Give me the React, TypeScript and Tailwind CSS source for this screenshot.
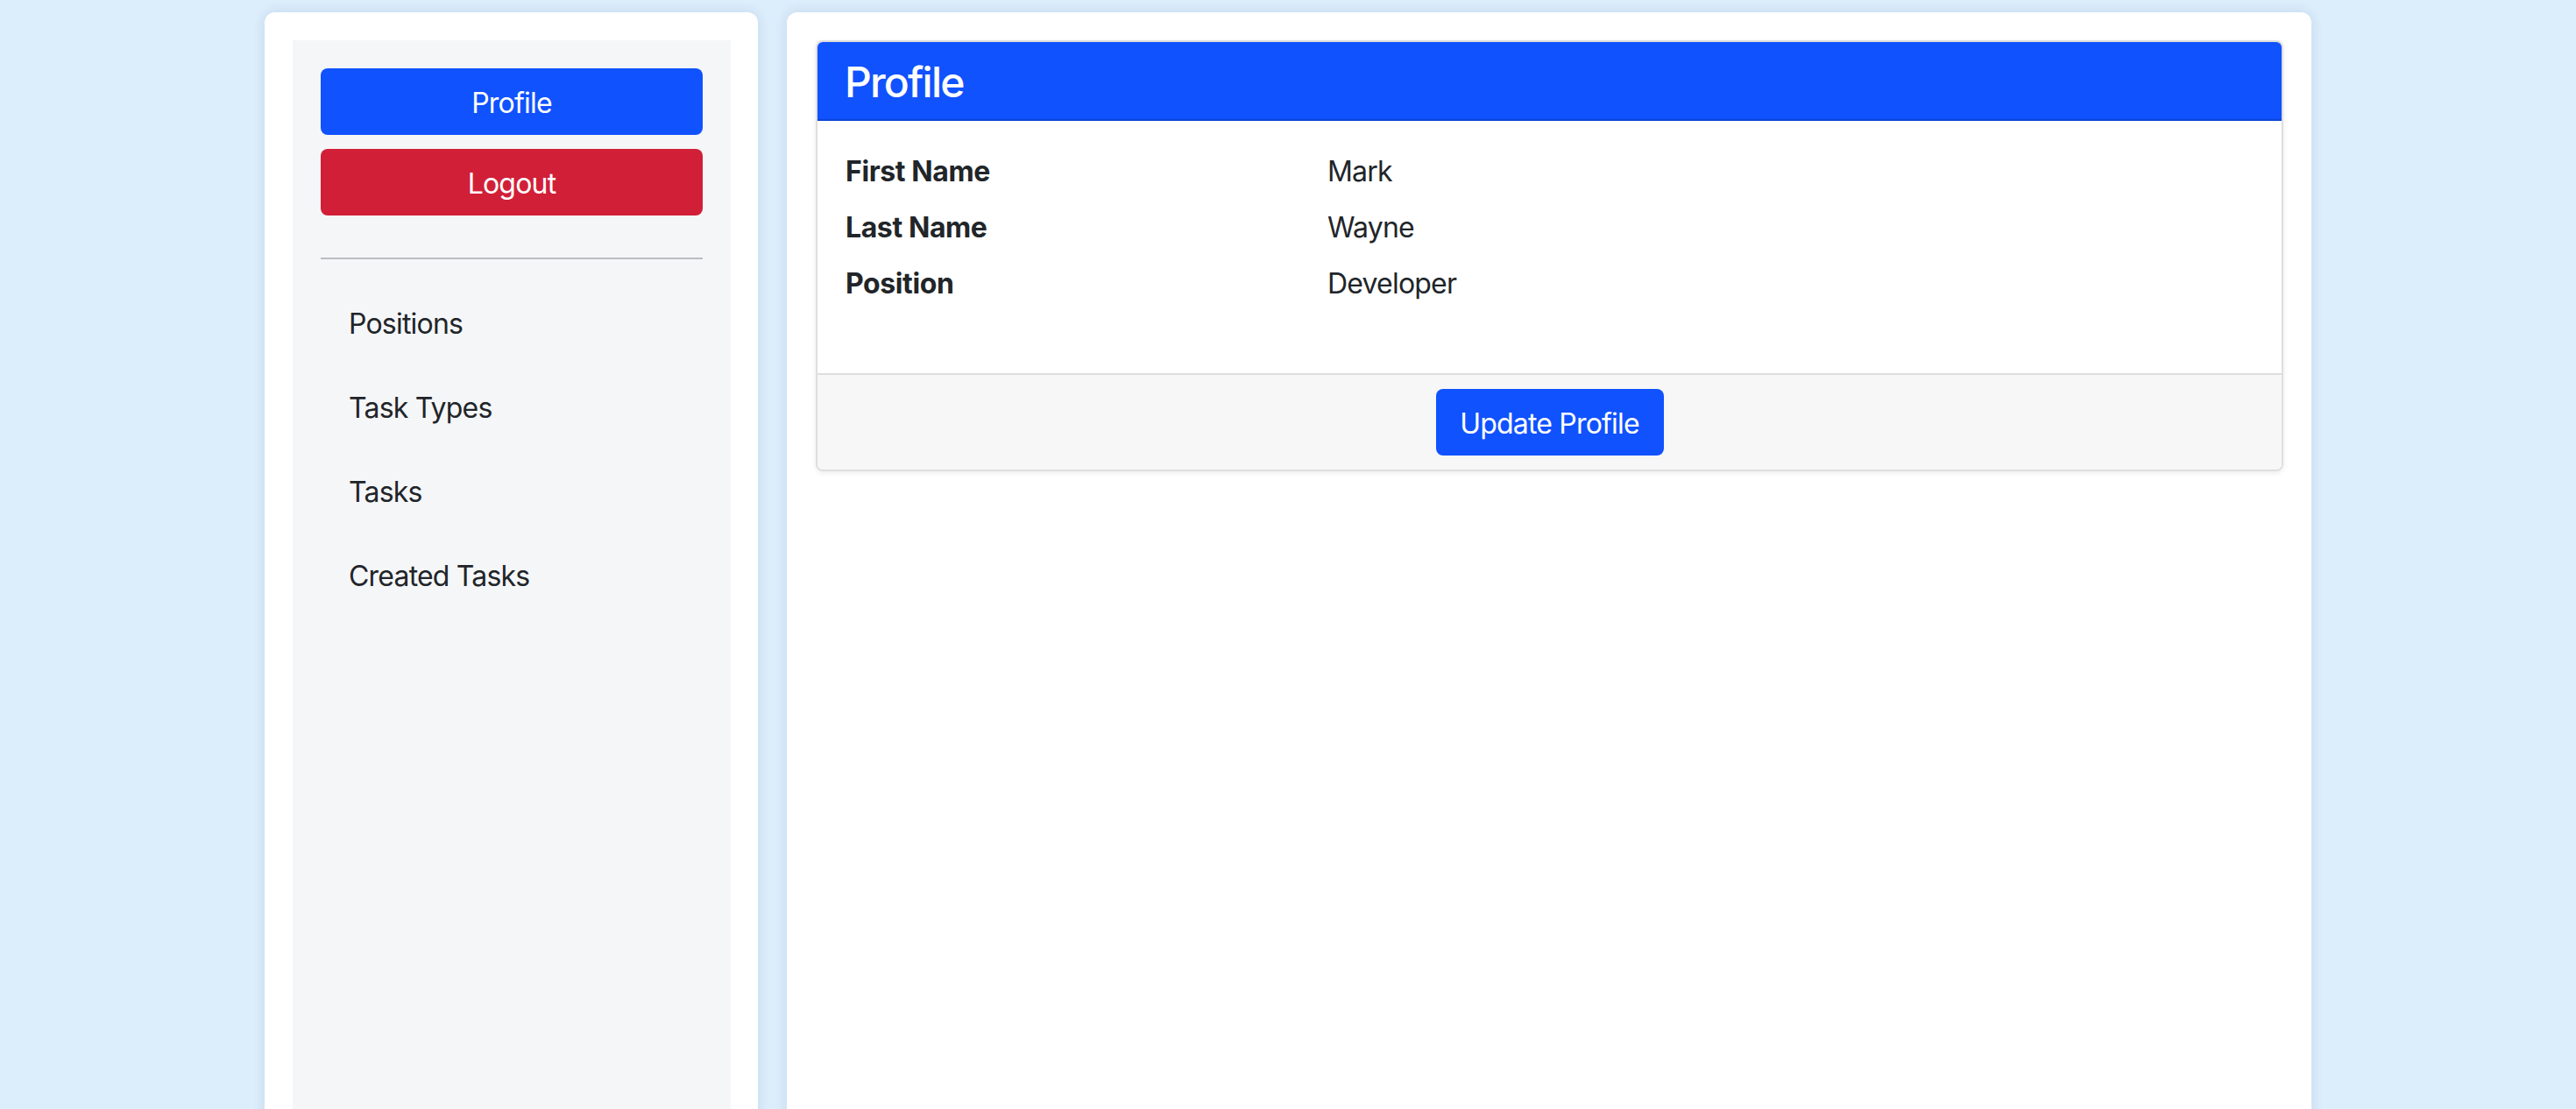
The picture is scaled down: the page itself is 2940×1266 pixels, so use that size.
import React from "react";

const navItems = ["Positions", "Task Types", "Tasks", "Created Tasks"];

const rows: [string, string][] = [
  ["First Name", "Mark"],
  ["Last Name", "Wayne"],
  ["Position", "Developer"],
];

export default function App() {
  return (
    <div
      className="h-[1266px] overflow-hidden bg-[#dcedfb] flex justify-center items-start gap-[33px] pt-[14px] text-[#212529]"
      style={{ fontFamily: "Inter, 'Noto Sans', Arial, sans-serif" }}
    >
      {/* Sidebar card */}
      <aside className="w-[563px] h-[1300px] bg-white rounded-[12px] shadow-[0_0_14px_rgba(40,90,140,0.14)] pt-[32px] pl-[32px] pr-[31px] flex">
        <div className="flex-1 bg-[#f5f6f8] px-[32px] pt-[32px] flex flex-col">
          <button className="h-[76px] w-full rounded-[8px] bg-[#1052fe] text-white text-[32px] leading-[48px] pt-[3px] tracking-[-0.8px]">
            Profile
          </button>
          <button className="mt-[16px] h-[76px] w-full rounded-[8px] bg-[#d11f38] text-white text-[32px] leading-[48px] pt-[3px] tracking-[-0.8px]">
            Logout
          </button>
          <div className="mt-[48px] h-[2px] w-full bg-[#bcbdc0]" />
          <nav className="mt-[26px] flex flex-col">
            {navItems.map((item) => (
              <a
                key={item}
                className="block px-[32px] py-[24px] text-[32px] leading-[48px] tracking-[-0.8px] text-[#212529]"
              >
                {item}
              </a>
            ))}
          </nav>
        </div>
      </aside>

      {/* Main card */}
      <main className="w-[1740px] h-[1300px] bg-white rounded-[12px] shadow-[0_0_14px_rgba(40,90,140,0.14)] pt-[32px] pl-[33px] pr-[32px]">
        <div className="rounded-[8px] border-2 border-[#dedede] shadow-[0_2px_6px_rgba(0,0,0,0.08)] overflow-hidden">
          <div className="bg-[#1052fe] border-b-2 border-[#0d45d6] px-[31px] h-[90px] flex items-center pt-[3px]">
            <h4 className="text-[48px] leading-[58px] font-medium text-white tracking-[-1.8px]">Profile</h4>
          </div>
          <div className="px-[32px] pt-[34px] pb-[62px] bg-white">
            {rows.map(([label, value], i) => (
              <div key={label} className={`flex ${i < rows.length - 1 ? "mb-[16px]" : ""}`}>
                <div className="w-[550px] text-[32px] leading-[48px] font-bold tracking-[-0.4px]">{label}</div>
                <div className="flex-1 text-[32px] leading-[48px] tracking-[-0.8px]">{value}</div>
              </div>
            ))}
            <div className="h-[16px]" />
          </div>
          <div className="border-t-2 border-[#dedede] bg-[#f7f7f7] py-[16px] flex justify-center">
            <button className="h-[76px] w-[260px] rounded-[8px] bg-[#1052fe] text-white text-[32px] leading-[48px] pt-[3px] tracking-[-0.8px]">
              Update Profile
            </button>
          </div>
        </div>
      </main>
    </div>
  );
}
